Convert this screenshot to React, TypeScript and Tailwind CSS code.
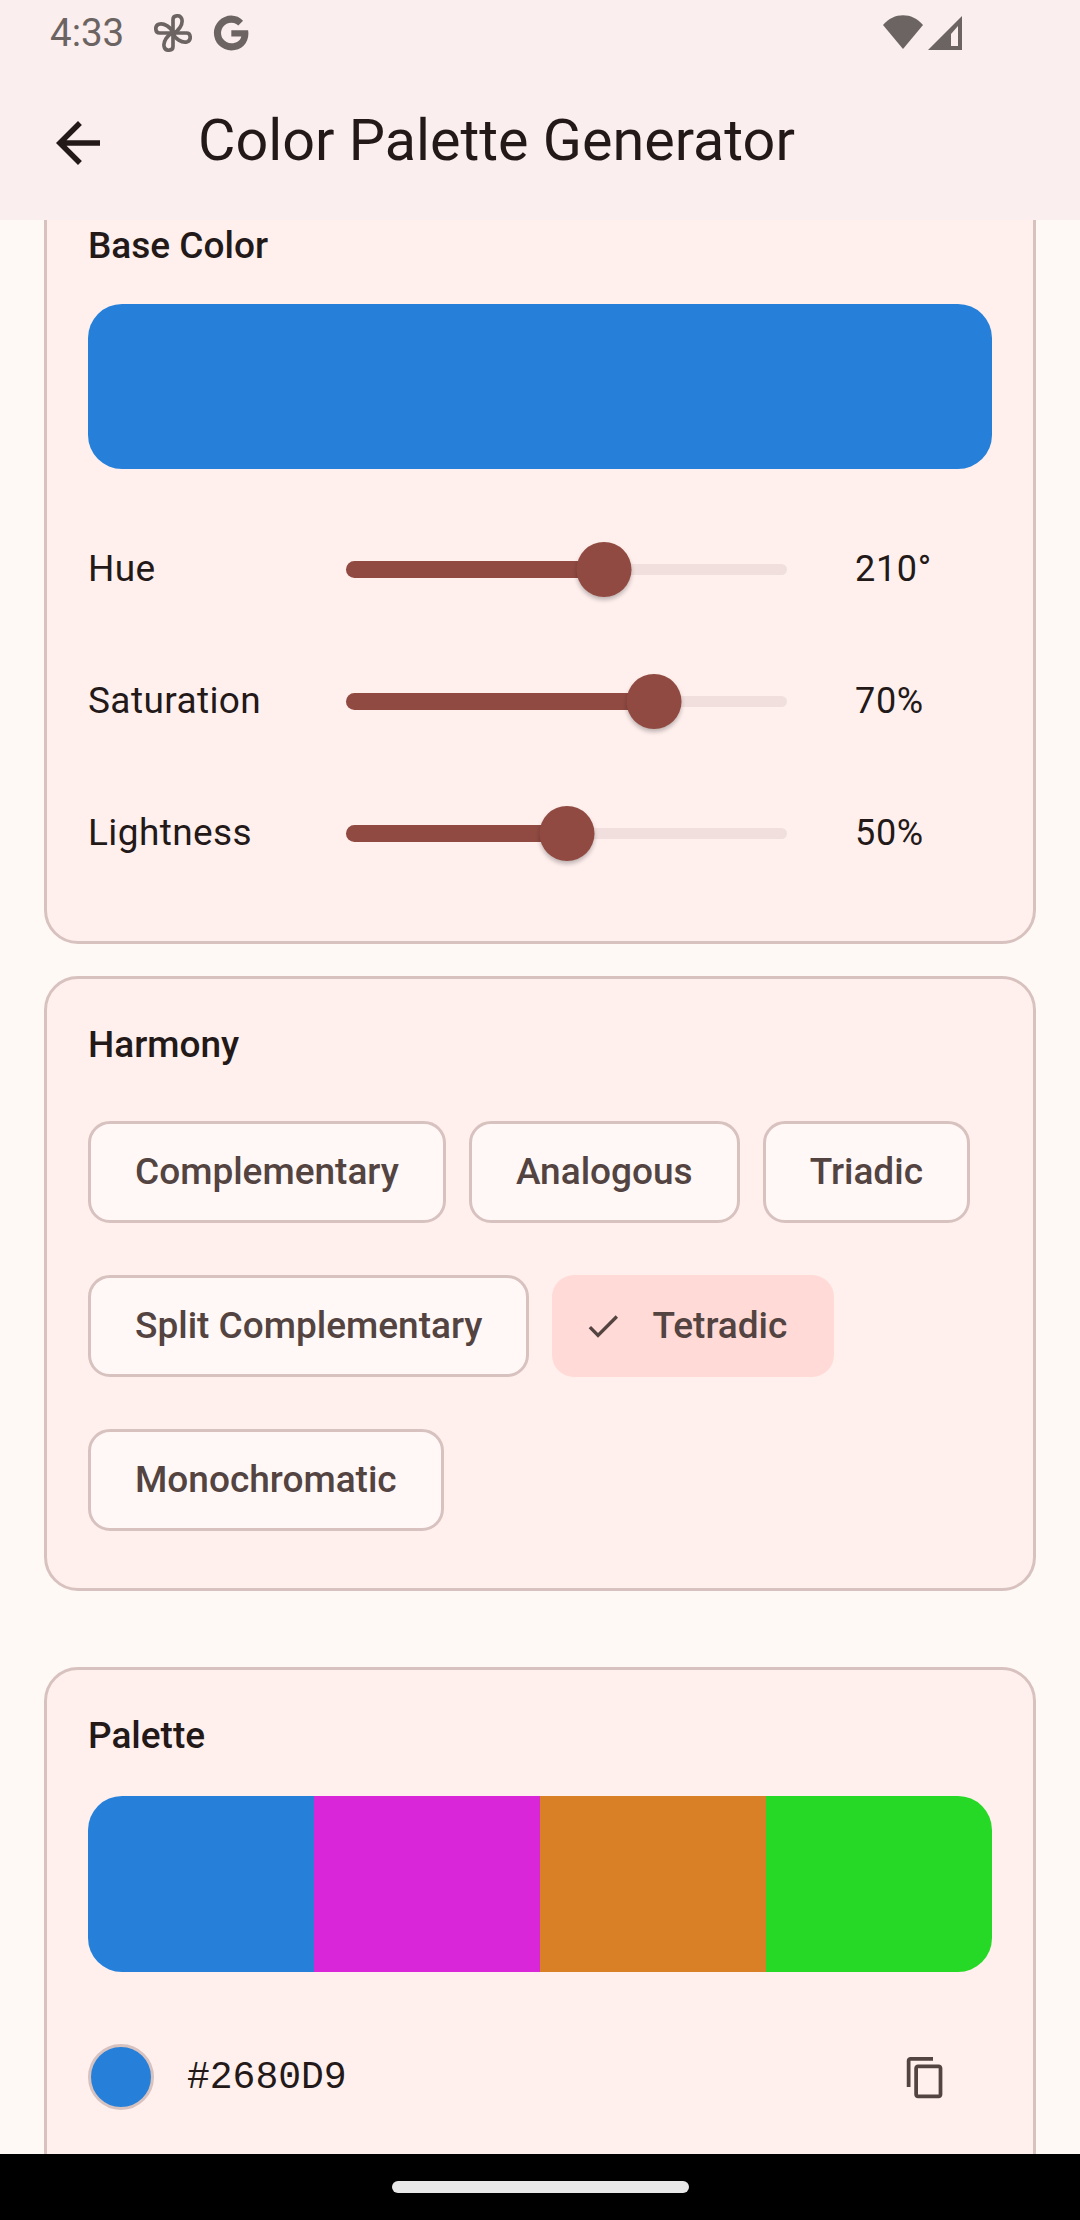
const sans = 'font-["Roboto",sans-serif]';

const sliders = [
  { label: 'Hue', value: '210°', pos: 258 },
  { label: 'Saturation', value: '70%', pos: 308 },
  { label: 'Lightness', value: '50%', pos: 221 },
];

const swatches = ['#2680D9', '#D926D9', '#D98026', '#26D926'];

function Chip({ label, selected }: { label: string; selected?: boolean }) {
  if (selected) {
    return (
      <div className="flex h-[102px] items-center rounded-[22px] bg-[#ffdad6] pl-[31px] pr-[47px] text-[37px] font-[460] text-[#534341]">
        <svg width="40" height="40" viewBox="0 0 24 24" className="mr-[29px]" fill="#534341">
          <path d="M9 16.17 4.83 12l-1.42 1.41L9 19 21 7l-1.41-1.41z" />
        </svg>
        {label}
      </div>
    );
  }
  return (
    <div className="flex h-[102px] items-center rounded-[22px] border-[3px] border-[#d8c2bf] bg-[#fff8f6] px-[44px] text-[37px] font-[460] text-[#534341]">
      {label}
    </div>
  );
}

function SliderRow({ label, value, pos }: { label: string; value: string; pos: number }) {
  return (
    <div className="flex h-[132px] items-center">
      <div className="w-[258px] text-[37px] tracking-[0.4px] text-[#231918]">{label}</div>
      <div className="relative h-[17px] w-[441px]">
        <div className="absolute left-0 right-0 top-[3px] h-[11px] rounded-full bg-[#f0dfdd]" />
        <div className="absolute left-0 top-0 h-[17px] rounded-l-full bg-[#904a42]" style={{ width: pos }} />
        <div
          className="absolute top-[-19px] h-[55px] w-[55px] -translate-x-1/2 rounded-full bg-[#904a42] shadow-[0_3px_4px_rgba(0,0,0,0.25)]"
          style={{ left: pos }}
        />
      </div>
      <div className="ml-[68px] text-[36px] tracking-[0.7px] text-[#231918]">{value}</div>
    </div>
  );
}

function Fan() {
  const petal = 'M12 12V3.500C12 .6 16.500 .3 17.500 3c1.100 3.200-2 8-5.500 9z';
  return (
    <svg width="38" height="38" viewBox="0 0 24 24" className="ml-[30px]" fill="none" stroke="#6b6463" strokeWidth="2.300" strokeLinejoin="round">
      <path d={petal} />
      <path d={petal} transform="rotate(90 12 12)" />
      <path d={petal} transform="rotate(180 12 12)" />
      <path d={petal} transform="rotate(270 12 12)" />
    </svg>
  );
}

function StatusBar() {
  return (
    <div className="flex h-[66px] items-center pl-[50px] pr-[118px] text-[#6b6463]">
      <span className="text-[38.5px]">4:33</span>
      <Fan />
      <svg width="38" height="38" viewBox="0 0 24 24" className="ml-[20px]" fill="#6b6463">
        <path d="M12.200 10.200v4h6.300c-.6 2.800-3 4.300-6.300 4.300a6.500 6.500 0 1 1 4.400-11.300l3-3A10.800 10.800 0 0 0 12.200 1a11 11 0 1 0 0 22c6.300 0 10.800-4.400 10.800-10.700 0-.7-.1-1.400-.2-2.100z" />
      </svg>
      <div className="flex-1" />
      <svg width="40" height="34" viewBox="0 0 40 34" fill="#6b6463" className="mt-[-2px]">
        <path d="M20 34 0 10C11-3 29-3 40 10z" />
      </svg>
      <svg width="34" height="34" viewBox="0 0 34 34" fill="#6b6463" className="ml-[5px]">
        <path fillRule="evenodd" d="M34 0v34H0zM30 10l-7 8v12h7z" />
      </svg>
    </div>
  );
}

function TopBar() {
  return (
    <div className="flex h-[154px] items-center pb-[4px] pl-[45px]">
      <svg width="66" height="66" viewBox="0 0 24 24" fill="#231918" className="mt-[4px]">
        <path d="M20 11H7.830l5.590-5.590L12 4l-8 8 8 8 1.410-1.410L7.830 13H20z" />
      </svg>
      <span className="ml-[87px] text-[57.5px] text-[#231918]">Color Palette Generator</span>
    </div>
  );
}

export default function App() {
  return (
    <div className={`flex h-[2220px] w-[1080px] flex-col overflow-hidden bg-[#fff9f6] ${sans}`}>
      <div className="bg-[#faeeee]">
        <StatusBar />
        <TopBar />
      </div>

      <div className="min-h-0 flex-1 overflow-hidden px-[44px]">
        <div className="mt-[-60px] flex flex-col">
          {/* Base color */}
          <div className="h-[784px] rounded-[34px] border-[3px] border-[#d8c2bf] bg-[#fff0ee] px-[41px] pt-[58px]">
            <div className="text-[37px] font-medium leading-[50px] text-[#231918]">Base Color</div>
            <div className="mt-[33px] h-[165px] rounded-[34px] bg-[#2680d9]" />
            <div className="mt-[34px]">
              {sliders.map((s) => (
                <SliderRow key={s.label} {...s} />
              ))}
            </div>
          </div>

          {/* Harmony */}
          <div className="mt-[32px] h-[615px] rounded-[34px] border-[3px] border-[#d8c2bf] bg-[#fff0ee] px-[41px] pt-[41px]">
            <div className="text-[37px] font-medium leading-[50px] text-[#231918]">Harmony</div>
            <div className="mt-[51px] flex w-[904px] flex-wrap gap-x-[23px] gap-y-[52px]">
              <Chip label="Complementary" />
              <Chip label="Analogous" />
              <Chip label="Triadic" />
              <Chip label="Split Complementary" />
              <Chip label="Tetradic" selected />
              <Chip label="Monochromatic" />
            </div>
          </div>

          {/* Palette */}
          <div className="mt-[76px] h-[600px] rounded-[34px] border-[3px] border-[#d8c2bf] bg-[#fff0ee] px-[41px] pt-[41px]">
            <div className="text-[37px] font-medium leading-[50px] text-[#231918]">Palette</div>
            <div className="mt-[35px] flex h-[176px] overflow-hidden rounded-[34px]">
              {swatches.map((c) => (
                <div key={c} className="flex-1" style={{ backgroundColor: c }} />
              ))}
            </div>
            <div className="mt-[72px] flex items-center">
              <div className="h-[66px] w-[66px] rounded-full border-[3px] border-[#d8c2bf] bg-[#2680d9]" />
              <span className='ml-[33px] font-["Liberation_Mono",monospace] text-[38px] text-[#231918]'>#2680D9</span>
              <div className="flex-1" />
              <svg width="45" height="45" viewBox="0 0 24 24" fill="#534341" className="mr-[44px]">
                <path d="M16 1H4c-1.100 0-2 .9-2 2v14h2V3h12V1zm3 4H8c-1.100 0-2 .9-2 2v14c0 1.100.9 2 2 2h11c1.100 0 2-.9 2-2V7c0-1.100-.9-2-2-2zm0 16H8V7h11v14z" />
              </svg>
            </div>
          </div>
        </div>
      </div>

      <div className="flex h-[66px] items-center justify-center bg-black">
        <div className="h-[12px] w-[297px] rounded-full bg-[#e8e8e8]" />
      </div>
    </div>
  );
}
